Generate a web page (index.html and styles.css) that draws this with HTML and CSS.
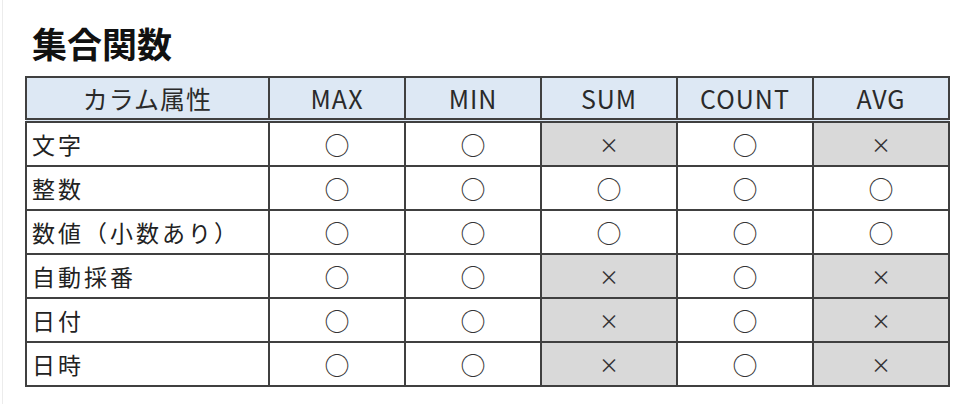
FILE: index.html
```html
<!DOCTYPE html>
<html lang="ja">
<head>
<meta charset="utf-8">
<link rel="stylesheet" href="styles.css">
</head>
<body>
<div class="page">
  <h1 class="title">集合関数</h1>
  <table class="agg">
    <colgroup>
      <col class="c-name"><col class="c-fn"><col class="c-fn"><col class="c-fn"><col class="c-fn"><col class="c-fn">
    </colgroup>
    <thead>
      <tr><th>カラム属性</th><th>MAX</th><th>MIN</th><th>SUM</th><th>COUNT</th><th>AVG</th></tr>
    </thead>
    <tbody>
      <tr><td class="name">文字</td><td class="ok">○</td><td class="ok">○</td><td class="ng">×</td><td class="ok">○</td><td class="ng">×</td></tr>
      <tr><td class="name">整数</td><td class="ok">○</td><td class="ok">○</td><td class="ok">○</td><td class="ok">○</td><td class="ok">○</td></tr>
      <tr><td class="name">数値（小数あり）</td><td class="ok">○</td><td class="ok">○</td><td class="ok">○</td><td class="ok">○</td><td class="ok">○</td></tr>
      <tr><td class="name">自動採番</td><td class="ok">○</td><td class="ok">○</td><td class="ng">×</td><td class="ok">○</td><td class="ng">×</td></tr>
      <tr><td class="name">日付</td><td class="ok">○</td><td class="ok">○</td><td class="ng">×</td><td class="ok">○</td><td class="ng">×</td></tr>
      <tr><td class="name">日時</td><td class="ok">○</td><td class="ok">○</td><td class="ng">×</td><td class="ok">○</td><td class="ng">×</td></tr>
    </tbody>
  </table>
</div>
</body>
</html>
```
FILE: styles.css
```css
html, body {
  margin: 0;
  padding: 0;
  background: #ffffff;
}
body {
  font-family: "Noto Sans CJK JP", "Noto Sans", sans-serif;
  color: #222222;
}
.page {
  margin-left: 2px;
  border-left: 1px solid #ececec;
  padding: 21px 0 0 22px;
  height: 383px;
}
.title {
  margin: 0 0 0 7px;
  font-size: 35px;
  line-height: 44px;
  font-weight: 700;
  color: #111111;
  height: 55px;
}
.agg {
  border-collapse: collapse;
  table-layout: fixed;
  width: 921px;
}
.c-name { width: 243px; }
.c-fn { width: 136px; }
.agg th, .agg td {
  border: 2px solid #404040;
  padding: 0;
  height: 42px;
  font-weight: 400;
}
.agg th {
  height: 40px;
  background: #dde8f4;
  font-size: 25px;
  letter-spacing: 1px;
  text-align: center;
  color: #2a2a2a;
  border-bottom: 5px double #404040;
}
.agg td {
  text-align: center;
  font-size: 22px;
}
.agg td.name {
  text-align: left;
  padding-left: 5px;
  font-size: 23px;
  letter-spacing: 3px;
}
.agg td.ok {
  font-size: 25px;
  color: #333333;
}
.agg td.ng {
  background: #d9d9d9;
  font-size: 20px;
  color: #333333;
}
```
